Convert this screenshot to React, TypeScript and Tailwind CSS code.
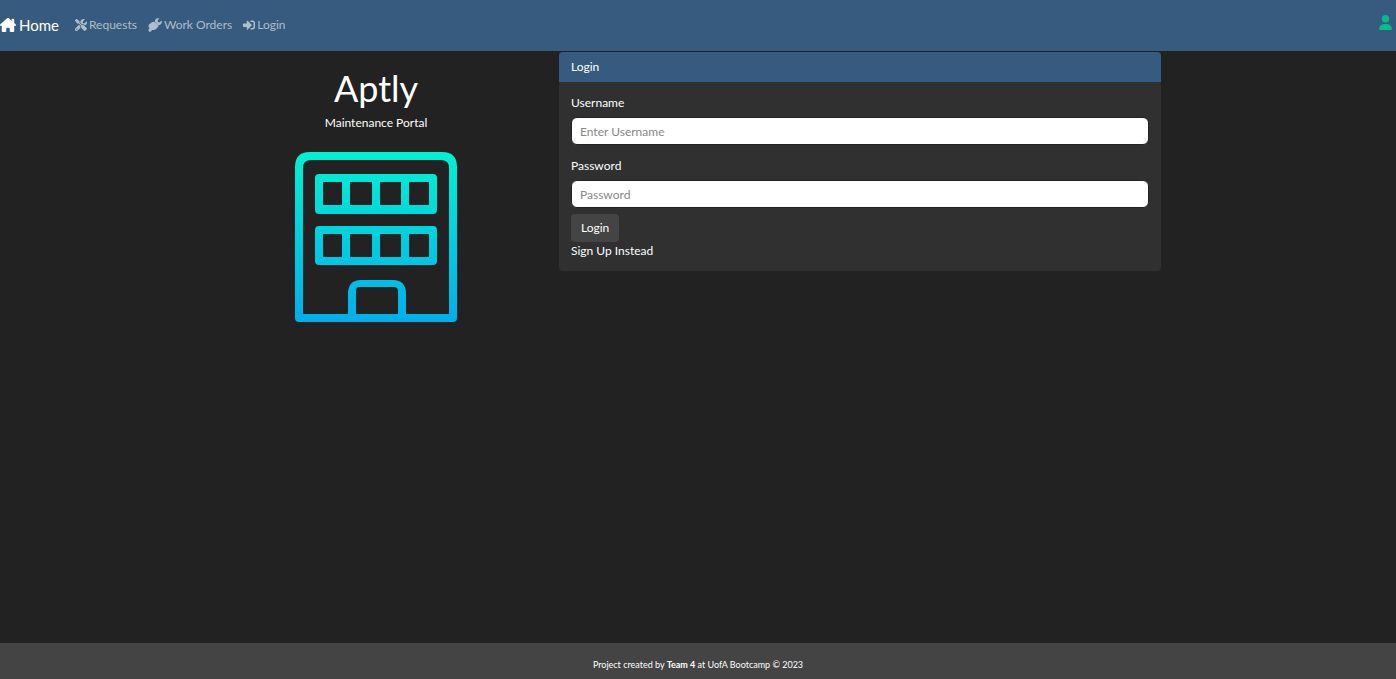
import React from "react";
import { FaHouseChimney, FaScrewdriverWrench, FaUser } from "react-icons/fa6";
import { FaSignInAlt } from "react-icons/fa";

function WrenchHandIcon() {
  return (
    <svg viewBox="0 0 28 28" className="size-3.5" fill="currentColor" aria-hidden="true">
      <path d="M1 15 Q1 13 3 12 L9 8 Q11 7 13 8 L15 10 L20 14 Q22 16 20 18 L16 22 Q14 24 11 24 L8 24 L6 27 Q4 28 2 27 Q0 25 1 23 L3 21 Q1 19 1 15 Z" />
      <path d="M14 8 Q13 3 17 1 Q20 0 23 1 L19 5 L20 8 L23 9 L27 5 Q29 10 25 13 Q23 15 20 14 Z" />
    </svg>
  );
}

function BuildingLogo() {
  return (
    <svg viewBox="0 0 162 170" className="h-[170px] w-[162px]" fill="none" role="img" aria-label="Apartment building">
      <defs>
        <linearGradient id="building" x1="0" y1="0" x2="0" y2="170" gradientUnits="userSpaceOnUse">
          <stop offset="0" stopColor="#00f2d2" />
          <stop offset="0.5" stopColor="#00d0df" />
          <stop offset="1" stopColor="#00aeea" />
        </linearGradient>
      </defs>
      <g fill="url(#building)" fillRule="evenodd">
        <path d="M15 0H147Q162 0 162 15V166Q162 170 158 170H4Q0 170 0 166V15Q0 0 15 0ZM16 8Q8 8 8 16V162H53V142Q53 128 66 128H98Q111 128 111 142V162H154V16Q154 8 146 8ZM64 135Q61 135 61 139V162H103V139Q103 135 99 135Z" />
        <path d="M24 22H138Q142 22 142 26V58Q142 62 138 62H24Q20 62 20 58V26Q20 22 24 22ZM28 30V53H47V30ZM55 30V53H77V30ZM85 30V53H106V30ZM114 30V53H134V30Z" />
        <path d="M24 74H138Q142 74 142 78V109Q142 113 138 113H24Q20 113 20 109V78Q20 74 24 74ZM28 82V105H47V82ZM55 82V105H77V82ZM85 82V105H106V82ZM114 82V105H134V82Z" />
      </g>
    </svg>
  );
}

const inputClass =
  "block h-7 w-full rounded-md border border-[#222] bg-white px-2 text-xs text-[#303030] placeholder:text-[#888] focus:outline-2 focus:outline-[#375a7f]";

export default function App() {
  return (
    <div className="flex min-h-screen flex-col bg-[#222] font-['Lato',sans-serif] text-xs text-white">
      <header className="flex h-[51px] items-center justify-between bg-[#375a7f]">
        <nav className="flex items-center" aria-label="Main">
          <a href="#home" className="mr-4 flex items-center gap-[3px] text-[15px]">
            <FaHouseChimney className="size-4" />
            Home
          </a>
          <div className="flex items-center gap-[11px] text-white/60">
            <a href="#requests" className="flex items-center gap-0.5">
              <FaScrewdriverWrench className="size-3" />
              Requests
            </a>
            <a href="#work-orders" className="flex items-center gap-0.5">
              <WrenchHandIcon />
              Work Orders
            </a>
            <a href="#login" className="flex items-center gap-0.5">
              <FaSignInAlt className="size-3" />
              Login
            </a>
          </div>
        </nav>
        <a href="#account" aria-label="Account" className="mr-1 mb-1.5 text-[#00bc8c]">
          <FaUser className="h-[15px] w-[13px]" />
        </a>
      </header>

      <main className="mx-auto grid w-full max-w-[966px] flex-1 grid-cols-3 items-start">
        <section className="flex flex-col items-center pt-[15px]">
          <h1 className="text-4xl leading-[44px]">Aptly</h1>
          <p className="mt-1 mb-5 leading-[18px]">Maintenance Portal</p>
          <BuildingLogo />
        </section>

        <section className="col-span-2 pt-px pr-5 pl-[22px]">
          <div className="overflow-hidden rounded-sm bg-[#303030]">
            <h2 className="bg-[#375a7f] px-3 py-1.5 leading-[18px]">Login</h2>
            <form className="flex flex-col items-start px-3 pt-3 pb-[11px]" onSubmit={(e) => e.preventDefault()}>
              <label htmlFor="username" className="mb-[5px] leading-[18px]">Username</label>
              <input id="username" type="text" placeholder="Enter Username" className={inputClass} />
              <label htmlFor="password" className="mt-3 mb-[5px] leading-[18px]">Password</label>
              <input id="password" type="password" placeholder="Password" className={inputClass} />
              <button type="submit" className="mt-1.5 h-7 rounded-sm bg-[#444] px-2.5">Login</button>
              <a href="#signup" className="leading-[18px]">Sign Up Instead</a>
            </form>
          </div>
        </section>
      </main>

      <footer className="flex h-9 items-center justify-center bg-[#444] pt-2 text-[9px]">
        <p>
          Project created by <b>Team 4</b> at UofA Bootcamp © 2023
        </p>
      </footer>
    </div>
  );
}
